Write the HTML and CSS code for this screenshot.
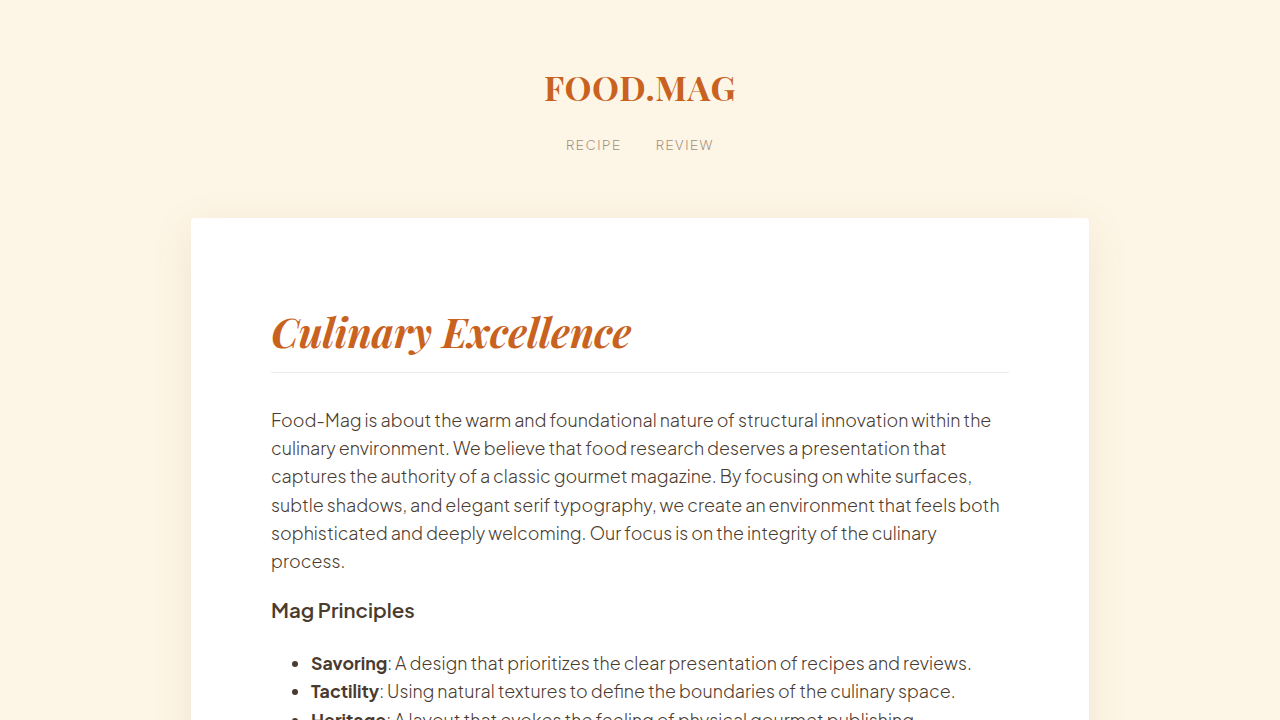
FILE: index.html
```html
<!DOCTYPE html>
<html lang="en">
<head>
<meta charset="utf-8">
<title>Food.Mag</title>
<link rel="stylesheet" href="styles.css">
</head>
<body>
<header class="site-header">
  <div class="logo">FOOD.MAG</div>
  <nav class="nav">
    <a href="#" class="nav-link">RECIPE</a>
    <a href="#" class="nav-link">REVIEW</a>
  </nav>
</header>
<main class="card">
  <h1 class="title">Culinary Excellence</h1>
  <p class="lead">Food-Mag is about the warm and foundational nature of structural innovation within the culinary environment. We believe that food research deserves a presentation that captures the authority of a classic gourmet magazine. By focusing on white surfaces, subtle shadows, and elegant serif typography, we create an environment that feels both sophisticated and deeply welcoming. Our focus is on the integrity of the culinary process.</p>
  <h3 class="subhead">Mag Principles</h3>
  <ul class="principles">
    <li><strong>Savoring</strong>: A design that prioritizes the clear presentation of recipes and reviews.</li>
    <li><strong>Tactility</strong>: Using natural textures to define the boundaries of the culinary space.</li>
    <li><strong>Heritage</strong>: A layout that evokes the feeling of physical gourmet publishing.</li>
  </ul>
</main>
</body>
</html>
```
FILE: styles.css
```css
html, body {
  margin: 0;
  padding: 0;
}
body {
  background: #fdf5e6;
  font-family: "Plus Jakarta Sans", "Inter", "Noto Sans", sans-serif;
  color: #4a3b2f;
}
.site-header {
  display: flex;
  flex-direction: column;
  align-items: center;
  padding-top: 64px;
  padding-bottom: 62px;
}
.logo {
  font-family: "Playfair Display", "Liberation Serif", serif;
  font-weight: 700;
  font-size: 34px;
  letter-spacing: 0.6px;
  color: #c8621e;
  line-height: 46px;
}
.nav {
  display: flex;
  gap: 34px;
  margin-top: 24px;
}
.nav-link {
  font-size: 13px;
  font-weight: 300;
  letter-spacing: 1.6px;
  color: #a08f80;
  text-decoration: none;
  line-height: 22px;
}
.card {
  width: 738px;
  margin: 0 auto;
  background: #fff;
  border-radius: 4px;
  padding: 80px;
  box-shadow: 0 10px 40px rgba(160, 120, 60, 0.12);
}
.title {
  font-family: "Playfair Display", "Liberation Serif", serif;
  font-style: italic;
  font-weight: 700;
  font-size: 40px;
  line-height: 48px;
  color: #c8621e;
  margin: 10px 0 0;
  padding-bottom: 16px;
  border-bottom: 1px solid #eeeae6;
}
.lead {
  font-size: 17.8px;
  font-weight: 300;
  line-height: 28.2px;
  margin: 33px 0 0;
}
.subhead {
  font-size: 20.5px;
  font-weight: 600;
  line-height: 30px;
  margin: 20px 0 0;
  color: #4a3b2f;
}
.principles {
  margin: 24px 0 0;
  padding-left: 40px;
  font-size: 17.8px;
  font-weight: 300;
  line-height: 28.2px;
}
.principles strong {
  font-weight: 700;
}
```
